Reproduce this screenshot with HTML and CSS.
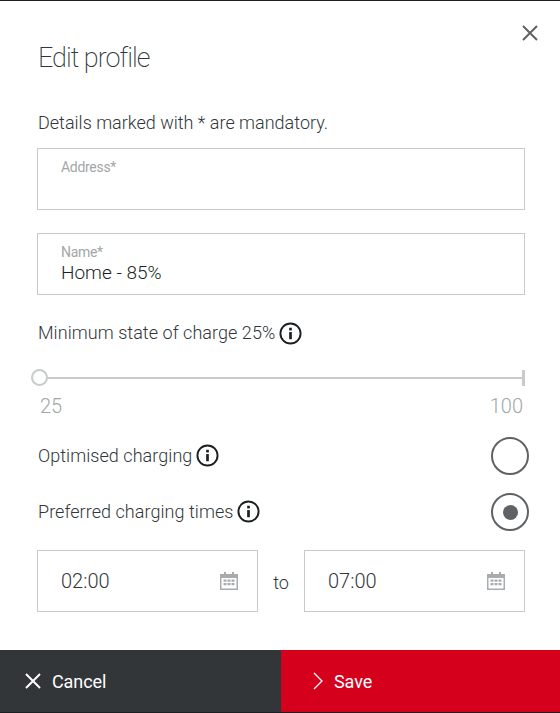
FILE: index.html
```html
<!DOCTYPE html>
<html lang="en">
<head>
    <meta charset="UTF-8">
    <meta name="viewport" content="width=device-width, initial-scale=1.0">
    <title>Edit profile</title>
    <link rel="stylesheet" href="styles.css">
</head>
<body>
    <div class="dialog">
        <div class="content">
            <div class="title-row">
                <h1>Edit profile</h1>
                <button class="close" type="button" aria-label="Close">
                    <svg width="16" height="16" viewBox="0 0 16 16"><path d="M1 1l14 14M15 1L1 15" fill="none" stroke="#5f6365" stroke-width="2"/></svg>
                </button>
            </div>
            <p class="hint">Details marked with * are mandatory.</p>
            <div class="field">
                <label>Address*</label>
                <div class="value"></div>
            </div>
            <div class="field field-name">
                <label>Name*</label>
                <div class="value">Home - 85%</div>
            </div>
            <div class="label-row soc">
                <span>Minimum state of charge 25%</span>
                <svg class="info" viewBox="0 0 24 24"><circle cx="12" cy="12" r="10.5" fill="none" stroke="#1c1f21" stroke-width="2"/><rect x="10.6" y="10.5" width="2.8" height="7.5" fill="#1c1f21"/><rect x="10.6" y="6" width="2.8" height="2.8" fill="#1c1f21"/></svg>
            </div>
            <div class="slider">
                <div class="track"></div>
                <div class="thumb"></div>
                <div class="tick"></div>
            </div>
            <div class="scale">
                <span>25</span>
                <span>100</span>
            </div>
            <div class="option first">
                <div class="label-row">
                    <span>Optimised charging</span>
                    <svg class="info" viewBox="0 0 24 24"><circle cx="12" cy="12" r="10.5" fill="none" stroke="#1c1f21" stroke-width="2"/><rect x="10.6" y="10.5" width="2.8" height="7.5" fill="#1c1f21"/><rect x="10.6" y="6" width="2.8" height="2.8" fill="#1c1f21"/></svg>
                </div>
                <div class="radio"></div>
            </div>
            <div class="option">
                <div class="label-row">
                    <span>Preferred charging times</span>
                    <svg class="info" viewBox="0 0 24 24"><circle cx="12" cy="12" r="10.5" fill="none" stroke="#1c1f21" stroke-width="2"/><rect x="10.6" y="10.5" width="2.8" height="7.5" fill="#1c1f21"/><rect x="10.6" y="6" width="2.8" height="2.8" fill="#1c1f21"/></svg>
                </div>
                <div class="radio checked"></div>
            </div>
            <div class="times">
                <div class="time-box">
                    <span>02:00</span>
                    <svg class="cal" viewBox="0 0 18 18"><path d="M4 0h2v3H4zM12 0h2v3h-2z" fill="#a9acae"/><path fill-rule="evenodd" d="M0 2h18v16H0zM1.5 6v10.5h15V6z" fill="#a9acae"/><path d="M3.5 7.5h3v2.2h-3zM7.5 7.5h3v2.2h-3zM11.5 7.5h3v2.2h-3zM3.5 11h3v2.2h-3zM7.5 11h3v2.2h-3zM11.5 11h3v2.2h-3z" fill="#a9acae"/></svg>
                </div>
                <span class="to">to</span>
                <div class="time-box">
                    <span>07:00</span>
                    <svg class="cal" viewBox="0 0 18 18"><path d="M4 0h2v3H4zM12 0h2v3h-2z" fill="#a9acae"/><path fill-rule="evenodd" d="M0 2h18v16H0zM1.5 6v10.5h15V6z" fill="#a9acae"/><path d="M3.5 7.5h3v2.2h-3zM7.5 7.5h3v2.2h-3zM11.5 7.5h3v2.2h-3zM3.5 11h3v2.2h-3zM7.5 11h3v2.2h-3zM11.5 11h3v2.2h-3z" fill="#a9acae"/></svg>
                </div>
            </div>
        </div>
        <div class="footer">
            <button class="btn cancel" type="button">
                <svg width="16" height="16" viewBox="0 0 16 16"><path d="M1 1l14 14M15 1L1 15" fill="none" stroke="#fff" stroke-width="2"/></svg>
                Cancel
            </button>
            <button class="btn save" type="button">
                <svg width="10" height="18" viewBox="0 0 10 18"><path d="M1 1l8 8-8 8" fill="none" stroke="#fff" stroke-width="1.3"/></svg>
                Save
            </button>
        </div>
    </div>
</body>
</html>
```

FILE: styles.css
```css
* {
    box-sizing: border-box;
}
html, body {
    height: 100%;
}
body {
    margin: 0;
    font-family: Roboto, "Liberation Sans", sans-serif;
    color: #323639;
    background-color: #fff;
}
.dialog {
    height: 713px;
    display: flex;
    flex-direction: column;
    border-top: 1px solid #1c1f21;
    border-bottom: 1px solid #1c1f21;
    overflow: hidden;
}
.content {
    flex: 1;
    padding: 0 35px 0 37px;
}
.title-row {
    display: flex;
    justify-content: space-between;
    align-items: flex-start;
    height: 106px;
}
h1 {
    margin: 39px 0 0 1px;
    font-size: 27px;
    line-height: 36px;
    font-weight: 200;
    letter-spacing: -1px;
    color: #323639;
}
.close {
    margin: 24px -13px 0 0;
    padding: 0;
    border: none;
    background: none;
    width: 16px;
    height: 16px;
}
.hint {
    margin: 0 0 9px 1px;
    font-size: 18px;
    line-height: 32px;
    font-weight: 300;
}
.field {
    height: 62px;
    padding: 10px 23px 0;
    border: 1px solid #c8cacb;
    background: #fff;
}
.field-name {
    margin-top: 23px;
}
.field label {
    display: block;
    font-size: 14px;
    line-height: 16px;
    letter-spacing: -0.3px;
    color: #a3a6a8;
}
.field .value {
    font-size: 19px;
    line-height: 26px;
    font-weight: 300;
    color: #1c1f21;
}
.label-row {
    display: flex;
    align-items: center;
    gap: 4px;
    margin-left: 1px;
    font-size: 18px;
    line-height: 24px;
    letter-spacing: 0.05px;
    font-weight: 300;
}
.soc {
    margin-top: 26px;
}
.info {
    width: 23px;
    height: 23px;
    flex: none;
}
.slider {
    position: relative;
    margin: 24px 0 0 3px;
    height: 18px;
}
.track {
    position: absolute;
    left: 0;
    right: 0;
    top: 8px;
    height: 2px;
    background: #c8cacb;
}
.thumb {
    position: absolute;
    left: -9px;
    top: 0;
    width: 17px;
    height: 17px;
    border: 2px solid #c8cacb;
    border-radius: 50%;
    background: #fff;
}
.tick {
    position: absolute;
    right: 0;
    top: 1px;
    width: 3px;
    height: 16px;
    background: #c8cacb;
}
.scale {
    display: flex;
    justify-content: space-between;
    margin-top: 7px;
    padding: 0 2px 0 3px;
    font-size: 20px;
    line-height: 24px;
    font-weight: 300;
    color: #a3a6a8;
}
.option {
    display: flex;
    justify-content: space-between;
    align-items: center;
    height: 38px;
    margin-top: 18px;
    margin-right: -4px;
}
.option.first {
    margin-top: 19px;
}
.option .label-row {
    margin-bottom: 1px;
}
.radio {
    width: 38px;
    height: 38px;
    border: 2px solid #5f6365;
    border-radius: 50%;
    background: #fff;
    display: flex;
    align-items: center;
    justify-content: center;
}
.radio.checked::after {
    content: '';
    width: 15px;
    height: 15px;
    border-radius: 50%;
    background: #5f6365;
}
.times {
    display: flex;
    align-items: center;
    margin-top: 19px;
}
.time-box {
    flex: 1;
    height: 62px;
    padding: 0 19px 0 23px;
    border: 1px solid #c8cacb;
    display: flex;
    align-items: center;
    justify-content: space-between;
    font-size: 20px;
    font-weight: 300;
}
.cal {
    width: 18px;
    height: 18px;
}
.to {
    width: 46px;
    text-align: center;
    font-size: 18px;
    font-weight: 300;
    padding-top: 3px;
}
.footer {
    display: flex;
    height: 62px;
}
.btn {
    border: none;
    display: flex;
    align-items: center;
    height: 62px;
    font-family: inherit;
    font-size: 18px;
    letter-spacing: -0.1px;
    color: #fff;
    cursor: pointer;
}
.cancel {
    width: 281px;
    padding: 0 0 0 25px;
    gap: 11px;
    background-color: #323639;
}
.save {
    flex: 1;
    padding: 0 0 0 32px;
    gap: 11px;
    background-color: #d5001c;
}
```
